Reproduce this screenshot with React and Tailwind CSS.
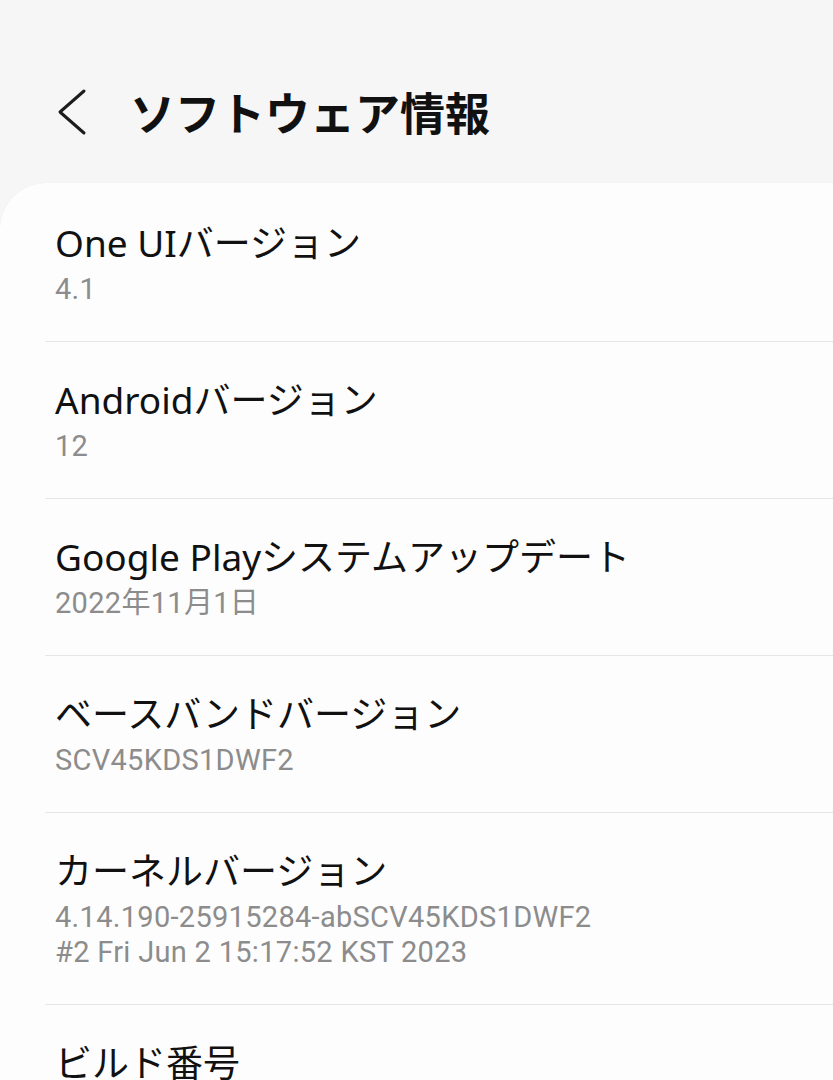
const items = [
  { title: "One UIバージョン", lines: ["4.1"] },
  { title: "Androidバージョン", lines: ["12"] },
  { title: "Google Playシステムアップデート", lines: ["2022年11月1日"] },
  { title: "ベースバンドバージョン", lines: ["SCV45KDS1DWF2"] },
  {
    title: "カーネルバージョン",
    lines: ["4.14.190-25915284-abSCV45KDS1DWF2", "#2 Fri Jun 2 15:17:52 KST 2023"],
  },
  { title: "ビルド番号", lines: ["SCV45KDS1DWF2"] },
];

const App = () => {
  return (
    <div
      className="h-[1080px] w-full overflow-hidden bg-[#f6f6f6]"
      style={{ fontFamily: '"Noto Sans", "Noto Sans CJK JP", sans-serif' }}
    >
      <header className="flex h-[183px] items-start pt-[86px]">
        <svg
          className="ml-[54px] h-[52px] w-[36px]"
          viewBox="0 0 36 52"
          fill="none"
          stroke="#1c1c1c"
          strokeWidth="3"
          strokeLinecap="round"
          strokeLinejoin="round"
        >
          <polyline points="30,5 6,26 30,47" />
        </svg>
        <h1
          className="ml-[40px] text-[45px] font-bold leading-[52px] text-[#111]"
          style={{ fontFamily: '"Noto Sans CJK JP", sans-serif' }}
        >
          ソフトウェア情報
        </h1>
      </header>

      <div className="rounded-tl-[46px] bg-[#fdfdfd] pl-[45px] pt-[2px] shadow-[0_0_1px_rgba(0,0,0,0.08)]">
        {items.map((item, i) => (
          <div
            key={i}
            className={`pl-[10px] pt-[34px] pb-[34px] ${i > 0 ? "border-t border-[#e6e6e6]" : ""}`}
          >
            <div className="text-[37px] leading-[48px] text-[#111]">{item.title}</div>
            <div
              className="mt-[5px] text-[29px] leading-[35px] tracking-[0.3px] text-[#8c8c8c]"
              style={{ fontFamily: 'Roboto, "Noto Sans CJK JP", sans-serif' }}
            >
              {item.lines.map((l, j) => (
                <div key={j}>{l}</div>
              ))}
            </div>
          </div>
        ))}
      </div>
    </div>
  );
};

export default App;
